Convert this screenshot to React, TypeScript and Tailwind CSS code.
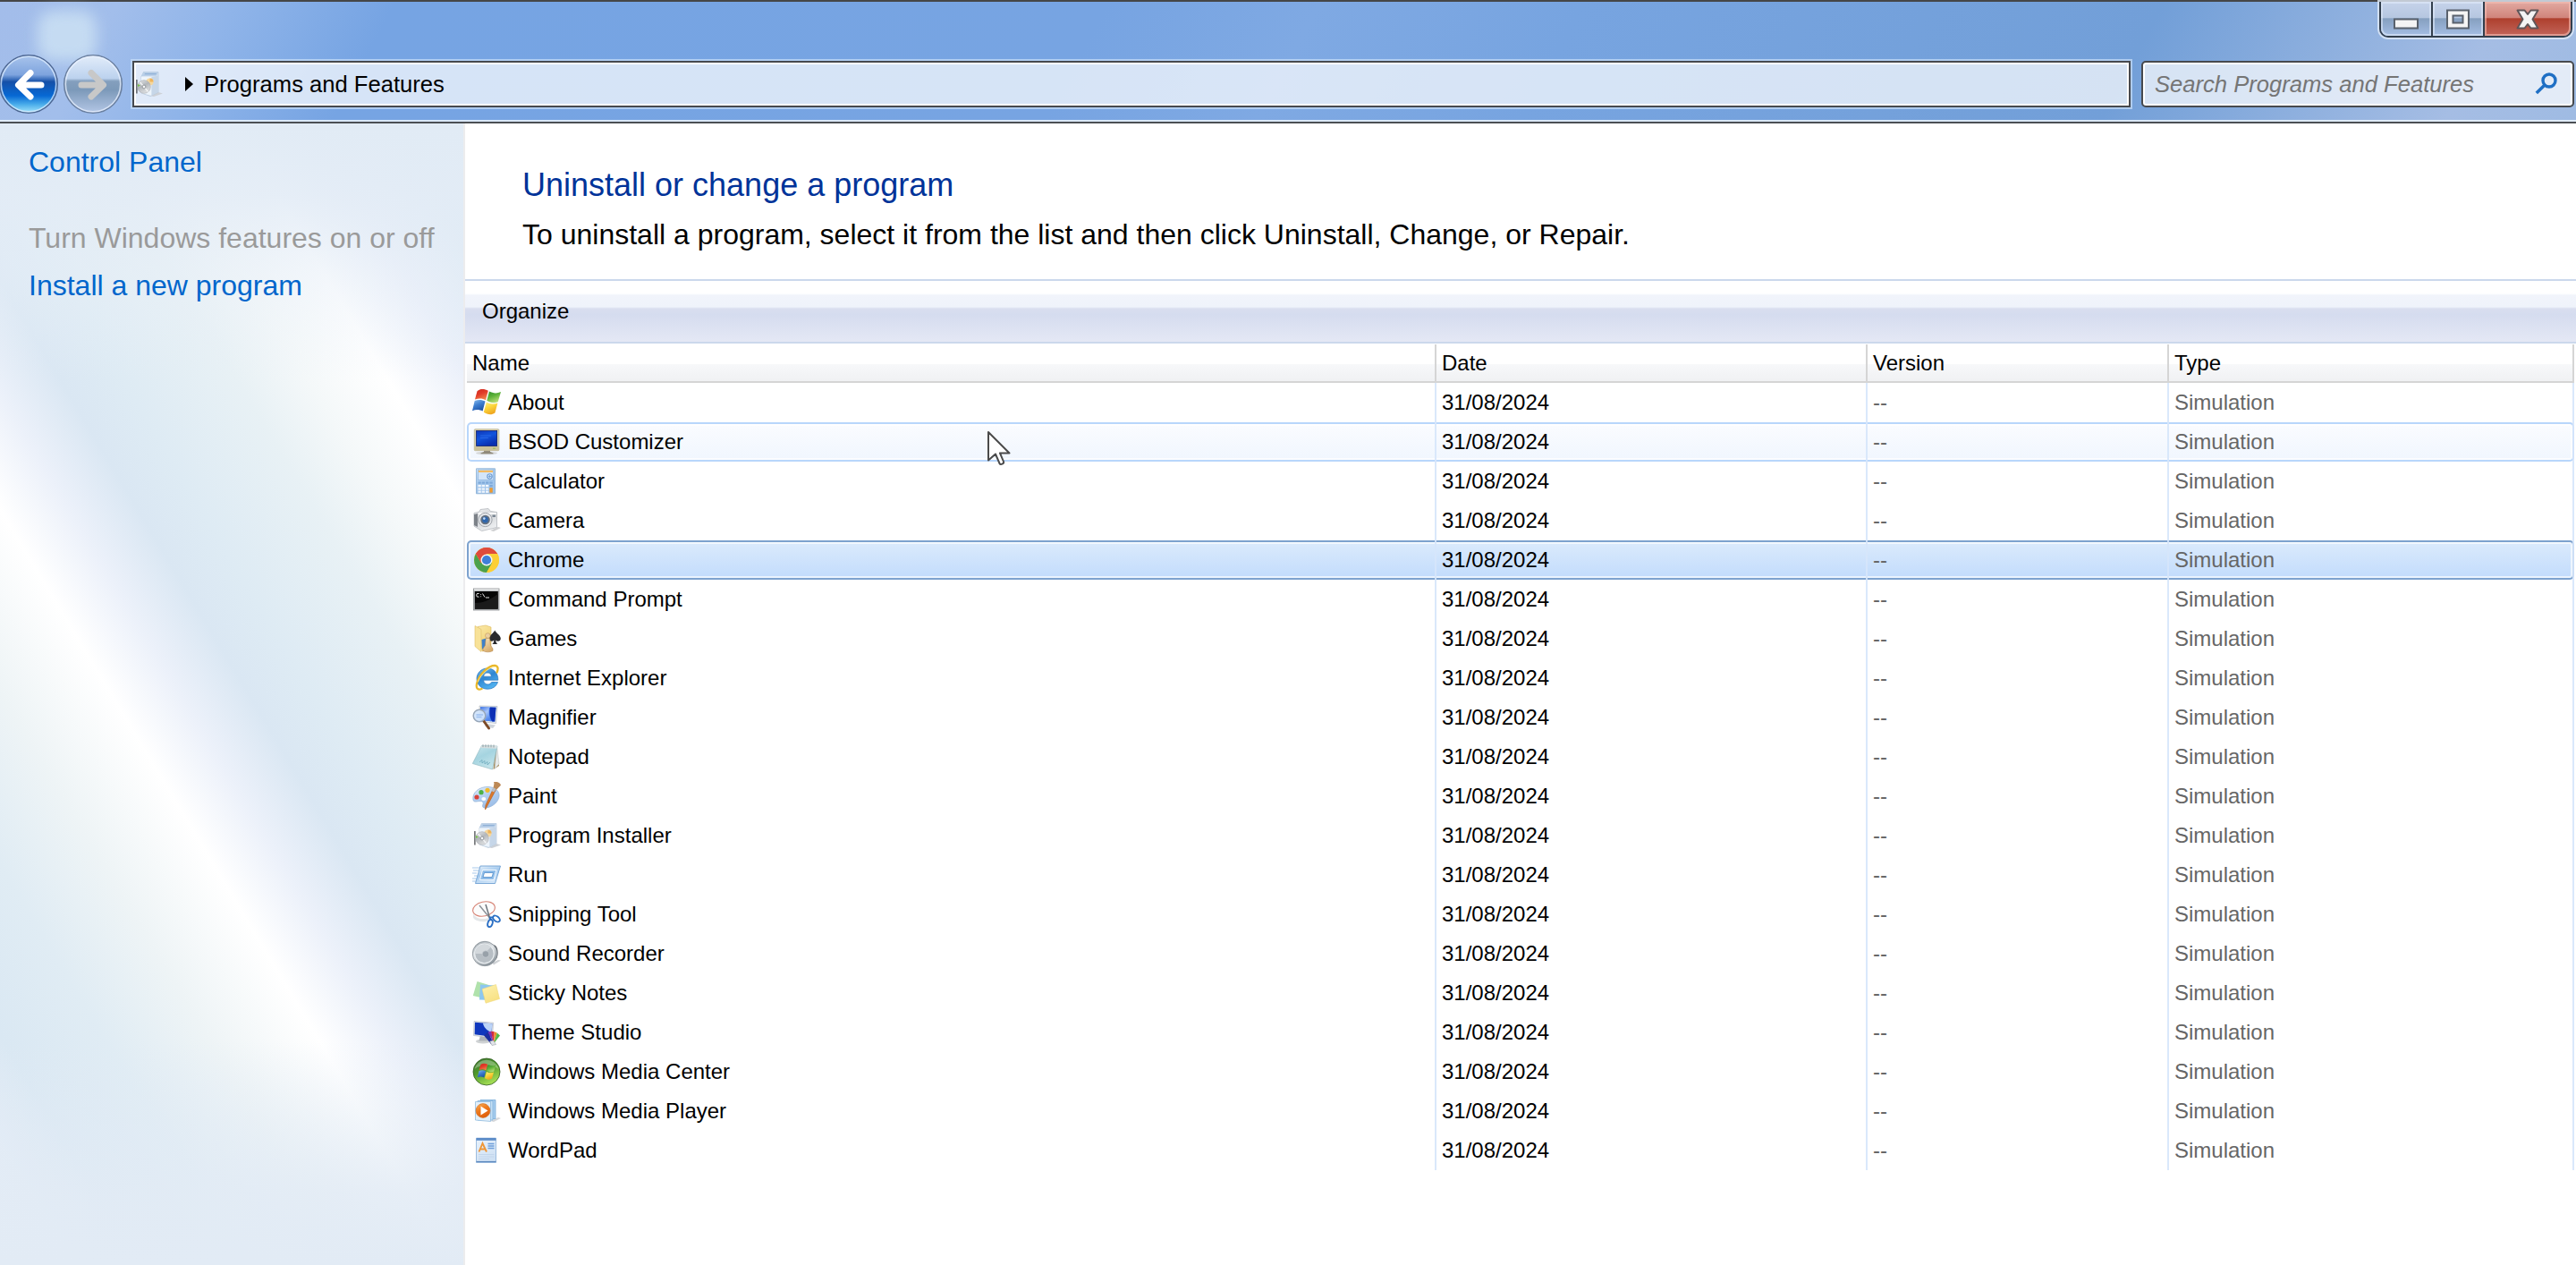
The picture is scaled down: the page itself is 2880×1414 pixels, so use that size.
import React from "react";

type IconProps = { className?: string };

function Svg({ children, className = "" }: { children: React.ReactNode; className?: string }) {
  return (
    <svg viewBox="0 0 32 32" className={`h-8 w-8 shrink-0 ${className}`} fill="none">
      {children}
    </svg>
  );
}

function Flag() {
  return (
    <>
      <path d="M5.500 3.200C9 .4 13.500 .6 17.800 2.800L15 13.200C11.500 11 7.500 11 3 12.400Z" fill="url(#fr)" />
      <path d="M19 3.600C23 5.600 27.500 6.200 32 4L28.800 15C24.500 17.200 20 16 16.300 13.800Z" fill="url(#fg)" />
      <path d="M2.700 14C7 12.400 11 12.600 14.500 14.600L11.600 25.600C8 23.600 4 23.600 0 25.200Z" fill="url(#fb)" />
      <path d="M15.800 15.500C19.500 17.500 24 18.200 28.400 16.500L25.400 27.500C21 30.600 16.500 29 12.800 26.800Z" fill="url(#fy)" />
    </>
  );
}

const AboutIcon = () => <Svg><Flag /></Svg>;

const BsodIcon = () => (
  <Svg>
    <ellipse cx="16" cy="28.500" rx="12" ry="1.800" fill="#d5d7d8" />
    <path d="M13 25h7v2l3.500 1.500v.8h-14v-.8L13 27Z" fill="#8f897a" />
    <rect x="2.300" y="1.700" width="27.500" height="24" rx="1" fill="#d9d2b0" stroke="#b9b191" strokeWidth=".8" />
    <path d="M2.500 20.500h27v4.800h-27Z" fill="#c9c09a" />
    <rect x="4.600" y="3.500" width="23" height="17" fill="url(#screen)" stroke="#11206c" strokeWidth=".8" />
    <path d="M9 9h12M9 11.500h9" stroke="#2f6ce8" strokeWidth=".8" />
    <path d="M23 23.200h3" stroke="#9fbf5a" strokeWidth="1.200" />
  </Svg>
);

const CalculatorIcon = () => (
  <Svg>
    <path d="M4.500 1.800h21v28h-21Z" fill="url(#calc)" stroke="#8fb2d6" strokeWidth=".9" />
    <rect x="6.300" y="3" width="17.400" height="11.500" fill="#d3e5f9" stroke="#84aedb" strokeWidth=".6" />
    <rect x="7" y="3.800" width="16" height="2.200" fill="#f3bb62" />
    <circle cx="19.500" cy="10.500" r="2.700" stroke="#6b9bd2" strokeWidth="1.100" />
    <path d="M18 10.500h3.500M19.500 9v3" stroke="#6b9bd2" strokeWidth=".8" />
    {[16.5, 20, 23.5, 26.6].map((y) =>
      [6.5, 10.7, 15, 19.4].map((x) => (
        <rect key={`${x}-${y}`} x={x} y={y} width="3.300" height="2.200" fill={x > 18 || y < 18 ? "#7ea9da" : "#f1f6fc"} />
      ))
    )}
    <rect x="19.400" y="23.300" width="3.300" height="5.300" fill="#f09a2c" />
  </Svg>
);

const CameraIcon = () => (
  <Svg>
    <path d="M20 27l9-4 3 1-8 4Z" fill="#cfd0d2" />
    <path d="M2 7.500l6-1.500 1-2.500 9-1 2.500 3 7 1v17l-17 4L2 22Z" fill="url(#metal)" stroke="#b4b8bc" strokeWidth=".8" />
    <path d="M2 9l4-1v15l-4-2Z" fill="#7c8188" />
    <path d="M7 8l20 0" stroke="#fff" strokeWidth="1.600" />
    <circle cx="14.500" cy="15" r="7.600" fill="#e6e8eb" stroke="#9ea3a9" />
    <circle cx="14.500" cy="15" r="5.300" fill="#66717e" />
    <circle cx="14.500" cy="15" r="3.400" fill="#2f67ad" />
    <circle cx="13.300" cy="13.600" r="1.300" fill="#c5dcf5" />
    <rect x="22.500" y="9.500" width="3.500" height="2.500" fill="#7c8794" />
  </Svg>
);

const ChromeIcon = () => (
  <Svg>
    <circle cx="16" cy="16" r="14" fill="#fdd03b" />
    <path d="M16 16L3.900 9A14 14 0 0 1 28.100 9Z" fill="#df4b3c" />
    <path d="M3.900 9A14 14 0 0 0 16 30l6-10.500L16 16 10 19.500Z" fill="#4aa14d" />
    <path d="M16 9h12.100A14 14 0 0 1 16 30l6.200-10.500Z" fill="#fccf35" />
    <path d="M3.900 9A14 14 0 0 1 28.100 9H16l-6 10.500Z" fill="#df4b3c" />
    <circle cx="16" cy="16" r="6.500" fill="#f5f6f7" />
    <circle cx="16" cy="16" r="5.100" fill="#3f7fd8" />
  </Svg>
);

const CommandIcon = () => (
  <Svg>
    <rect x="1.400" y="4" width="28.600" height="24" fill="#b7babd" stroke="#8d9092" strokeWidth=".8" />
    <path d="M2 5.200h27.500" stroke="#e9ebec" strokeWidth="1.500" />
    <rect x="2.800" y="7" width="26" height="19.800" fill="#050505" />
    <path d="M3 20c9 0 16-3 25.600-10v16.500H3Z" fill="#1a1a1a" />
    <path d="M7.500 9.500H6q-1.200 0-1.200 1.200v1.200q0 1.200 1.200 1.200h1.500M9.600 10v.8M9.600 12.400v.8M11.500 9.500l2.500 4M15 14h4" stroke="#e5e5e5" strokeWidth="1" />
  </Svg>
);

const GamesIcon = () => (
  <Svg>
    <path d="M6 2.500l9-1.500 6 2v24l-10 3Z" fill="url(#folder)" stroke="#dcb95b" strokeWidth=".6" />
    <path d="M3 1.500l7 4v25l-7-6Z" fill="#f8e298" stroke="#dfc06a" strokeWidth=".6" />
    <path d="M10.500 17l5-1.500L19 27l-8 .5Z" fill="#3f80c8" />
    <path d="M25.200 6.500c1.500 3.300 6.600 5.500 6.600 9.300 0 3-3.500 4-5.500 1.800 0 2 .8 3.500 2 4.500h-6c1.200-1 2-2.500 2-4.500-2 2.200-5.300 1.200-5.300-1.800 0-3.800 4.700-6 6.200-9.300Z" fill="#29292c" />
    <circle cx="17.300" cy="12.500" r="2.800" fill="#ecd0a0" stroke="#b98c50" strokeWidth=".5" />
    <path d="M15.200 15.500h4.300l1 8 2.500 3.500v2.500c-3 1.800-8 1.800-11 0V27l2.400-3.500Z" fill="url(#pawn)" stroke="#ae8047" strokeWidth=".5" />
  </Svg>
);

const IeIcon = () => (
  <Svg>
    <path d="M28.500 20.500c-1.700 5-6 7.700-11.500 7.700-7 0-12-5-12-11.500S10 5 17 5 29 10.500 28.800 18.200H12.600c.2 3 2 4.800 4.800 4.800 2 0 3.500-.9 4.200-2.500Z" fill="url(#ie)" stroke="#2471bb" strokeWidth=".7" />
    <path d="M12.700 14.200h8.700c-.3-2.700-1.900-4.200-4.400-4.200s-4 1.600-4.300 4.200Z" fill="#f7fbff" stroke="#2471bb" strokeWidth=".6" />
    <path d="M27.600 9.500C29.500 5 28.500 2.300 25.600 2 19 1.500 8 11 5.200 21.500c-1.300 5 .2 8.500 5.300 6.500" stroke="#e9b72a" strokeWidth="2.300" strokeLinecap="round" />
    <path d="M26.500 3.500C20 2.500 10 11 6.500 20" stroke="#fff0a0" strokeWidth=".8" />
  </Svg>
);

const MagnifierIcon = () => (
  <Svg>
    <path d="M16 23l10 1.500-3 3.500-9-2Z" fill="#cfd4da" />
    <path d="M8 3l20 .5-1.500 19L9 20.500Z" fill="#e5e9ee" stroke="#a8b0ba" strokeWidth=".6" />
    <path d="M9 4.300l17.500.5-1.300 16L10 19Z" fill="#3b78ea" />
    <path d="M9 4.300l10 .3c-1 6 0 11 2 15.700L10 19Z" fill="url(#screen2)" />
    <path d="M20 4.600l6.500.2-1.300 15.800-3-.2c-3-5-3.200-10-2.200-15.800Z" fill="#0d2fb5" />
    <path d="M12.500 19.500l6 8.500" stroke="#7c4a26" strokeWidth="3" strokeLinecap="round" />
    <circle cx="8" cy="14" r="6.800" fill="#cfe3fb" fillOpacity=".92" stroke="#97a6b8" strokeWidth="1.500" />
    <path d="M4.500 13h7.500M4.500 15.500h6" stroke="#9dbff0" strokeWidth="1.300" />
  </Svg>
);

const NotepadIcon = () => (
  <Svg>
    <path d="M26 6l4 20-6.500 4Z" fill="#a78a55" />
    <path d="M27.500 4l2.500 20-5 5.500Z" fill="#e6eaea" stroke="#b6bcbc" strokeWidth=".5" />
    <path d="M10.500 3.500L28 4 22.500 30 .3 23.500Z" fill="url(#note)" stroke="#8db5be" strokeWidth=".6" />
    <path d="M10.500 3.500L28 4l-.7 2.800L9.300 6Z" fill="#d8e0e2" />
    <path d="M12 2.200v3M15 2.200v3M18 2.300v3M21 2.400v3M24 2.500v3" stroke="#8b979b" strokeWidth=".9" />
    <path d="M8 22l3-2.500v3.500l3-2.500V24l3-2.500V25l3-3" stroke="#6fabbe" strokeWidth=".8" />
  </Svg>
);

const PaintIcon = () => (
  <Svg>
    <path d="M1 20C-.5 12 8 5 18 5.500c8 .4 12.600 5 12 10.500-.5 6-7 12-14.500 13-4 .5-4.500-1.500-3.500-4 .8-2.200-.6-3.600-3-3.600C6 21.500 1.500 23.500 1 20Z" fill="url(#palette)" stroke="#90b0d6" strokeWidth=".7" />
    <ellipse cx="12.800" cy="19" rx="2.500" ry="2" fill="#fff" />
    <circle cx="5" cy="17" r="2.600" fill="#d9433a" />
    <circle cx="10" cy="11.700" r="2.600" fill="#4db247" />
    <circle cx="17" cy="9.300" r="2.600" fill="#f0b92c" />
    <path d="M26.500 8.500L14.500 31 15 26 23.500 7.500Z" fill="#dd7a2c" stroke="#b45c1c" strokeWidth=".7" />
    <path d="M27 7.500l-2.800 4-2.800-1.600 2.200-4Z" fill="#b9bec4" />
    <path d="M24 0c3-1 7 1 8 3.500-1 2-3.500 3-4.500 5l-4-2.200C24 4 25 2 24 0Z" fill="#bd8956" />
  </Svg>
);

const InstallerIcon = ({ className }: IconProps) => (
  <Svg className={className}>
    <path d="M17 29l10-4 5 1.500-10 3.500Z" fill="#cdd1d7" />
    <path d="M8 7.500L10.500 2.500h16.500L27 25l-9 4.500L8 26Z" fill="#d9e5f3" stroke="#aabdd3" strokeWidth=".6" />
    <path d="M8 7.500l11.500.6v20.700L8 26Z" fill="#edf4fb" />
    <path d="M10.500 2.500H27l-2 4.300L8 7.300Z" fill="#b9cfe8" />
    <path d="M12 4h13l-.8 1.300H11.500Z" fill="#8fb0d6" />
    <path d="M19.500 8.100l7.300-1.600V25l-7.300 4Z" fill="#c6d6e8" />
    <circle cx="17.500" cy="13.500" r="4" fill="#f6d79c" />
    <path d="M17.500 9.500a4 4 0 0 1 4 4h-4Z" fill="#eeb45c" />
    <path d="M2.900 11v15.500" stroke="#4a4d50" strokeWidth="1.300" />
    <circle cx="11" cy="19" r="7.300" fill="url(#disc)" stroke="#a6aaaf" strokeWidth=".6" />
    <path d="M11 19l-4.500-5M11 19l4.500 5.500" stroke="#f2f3f4" strokeWidth="1.400" />
    <path d="M7 17.500l-3-1.500v3Z" fill="#77c14b" />
    <circle cx="11" cy="19" r="1.900" fill="#f6f7f8" stroke="#80858b" strokeWidth=".8" />
  </Svg>
);

const RunIcon = () => (
  <Svg>
    <path d="M0 8h8M1 11h6M0 14h5M2 17h4M0 20h5M0 23h4" stroke="#a7c9ea" strokeWidth="1" />
    <path d="M9 6h22.500l-6 19.500H3.500Z" fill="url(#run)" stroke="#6d9fd2" strokeWidth=".9" />
    <path d="M11.500 10.500h15.500l-3 11H8.500Z" fill="#8fbde9" stroke="#fff" strokeWidth=".9" />
    <path d="M13.500 13.500h10l-1.500 5H12Z" fill="#fff" stroke="#4f8cc9" strokeWidth=".8" />
  </Svg>
);

const SnippingIcon = () => (
  <Svg>
    <path d="M1 15c2 6 12 8 20 4v3c-7 4-19 2-20-3Z" fill="#e3e6e8" />
    <ellipse cx="13" cy="10" rx="12.500" ry="8" transform="rotate(-12 13 10)" fill="#fcfcfc" stroke="#d78476" strokeWidth="1.100" />
    <path d="M8 6l11.500 14" stroke="#8c9299" strokeWidth="1.500" />
    <path d="M15 5l4.500 15" stroke="#6c737b" strokeWidth="1.500" />
    <ellipse cx="20" cy="26" rx="2.600" ry="4.200" transform="rotate(18 20 26)" stroke="#2b6fc4" strokeWidth="1.900" />
    <ellipse cx="27" cy="21" rx="2.700" ry="4.400" transform="rotate(-52 27 21)" stroke="#2b6fc4" strokeWidth="1.900" />
    <path d="M19.500 19.500l1 3M19.500 19.500l4 0" stroke="#2b6fc4" strokeWidth="2" />
  </Svg>
);

const SoundIcon = () => (
  <Svg>
    <path d="M22 26l7-3 3 .5-8 5Z" fill="#cfd2d5" />
    <path d="M17 3l9 4c3.500 3 3.500 13 0 16l-8 6Z" fill="#5d6369" />
    <path d="M20 6l5 2v15l-5 4Z" fill="#b4babf" />
    <circle cx="14" cy="16" r="13.700" fill="url(#metal2)" stroke="#8d959c" strokeWidth=".9" />
    <circle cx="13.500" cy="16" r="10.800" fill="#b7bec4" stroke="#e9edf0" strokeWidth="1.200" />
    <path d="M3 16a10.600 10.600 0 0 1 18-7.500L13.500 16Z" fill="#d3d8dc" />
    <circle cx="15" cy="16.500" r="3.800" fill="#98a1a9" stroke="#c9cfd4" strokeWidth=".7" />
  </Svg>
);

const StickyIcon = () => (
  <Svg>
    <path d="M5.500 3l13 4-5 15L.8 19Z" fill="#b0e2ac" />
    <path d="M9 6.500l16 1-2 16.500-15-.5Z" fill="#8cc7f0" />
    <path d="M11 11.500L26.500 6.500l4 16-15.500 4.800Z" fill="url(#sticky)" stroke="#eed56e" strokeWidth=".5" />
  </Svg>
);

const ThemeIcon = () => (
  <Svg>
    <ellipse cx="12" cy="26" rx="8" ry="2.500" fill="#cfd2d4" />
    <path d="M9 19h7l1 6.500H7.500Z" fill="#adb2b7" />
    <path d="M2 3.500l21.500 1.700-1 17L1.500 19.500Z" fill="#dde2e8" stroke="#a4abb5" strokeWidth=".5" />
    <path d="M3 4.700l19.300 1.500-.8 14.500L2.700 18.300Z" fill="#0f37bd" />
    <path d="M12 5.400l10.300.8-.7 10C16 13.500 12.500 10 12 5.400Z" fill="#bcd4f8" />
    <path d="M13 19.500l4.500-4 6.500 13-3 .5Z" fill="#1b2e9e" />
    <path d="M17.500 15.500l3.500-.7 3 13.700Z" fill="#7c32b4" />
    <path d="M21 14.800l3.700.4-.7 13.300Z" fill="#d32c3e" />
    <path d="M24.700 15.200l3 1.300-3.700 12Z" fill="#ef8d26" />
    <path d="M27.700 16.500l3.300 3-7 9Z" fill="#53b749" />
    <path d="M19.500 26l4-1 3 4.500-4.500 1Z" fill="#e1e4e8" stroke="#8c939b" strokeWidth=".5" />
  </Svg>
);

const MediaCenterIcon = () => (
  <Svg>
    <circle cx="16" cy="16" r="15" fill="url(#mc)" stroke="#2f5c1d" strokeWidth=".8" />
    <path d="M2.500 13A14 14 0 0 1 29.500 13C22 7 10 7 2.500 13Z" fill="#fff" fillOpacity=".3" />
    <g transform="translate(5.800 6) scale(.64)"><Flag /></g>
  </Svg>
);

const MediaPlayerIcon = () => (
  <Svg>
    <path d="M20 27l9-4 3 1-8 4Z" fill="#d5d7da" />
    <path d="M9 3.500h17v21H9Z" fill="#a7cdee" stroke="#6ea5d4" strokeWidth=".7" />
    <path d="M6 4.500h17v21.500H6Z" fill="#c4dff5" stroke="#78acd8" strokeWidth=".7" />
    <path d="M3.500 5.500l17 0v22l-17-1.500Z" fill="#e2eff9" stroke="#86b4db" strokeWidth=".7" />
    <circle cx="12" cy="15.500" r="7.900" fill="url(#wmp)" stroke="#cc681b" strokeWidth=".6" />
    <path d="M9.500 10.500l8 5-8 5Z" fill="#fff" />
  </Svg>
);

const WordpadIcon = () => (
  <Svg>
    <path d="M4.500 2.500h22v27h-22Z" fill="url(#wp)" stroke="#89afd8" strokeWidth=".8" />
    <rect x="4.500" y="1.800" width="22" height="3" fill="#5c8cc8" />
    <path d="M7.500 17.500L11.500 8l4.500 9.500M9 14.500h5.500" stroke="#ef9636" strokeWidth="1.900" />
    <path d="M17.500 8.500h7M17.500 11h7M17.500 13.500h7" stroke="#6f9fda" strokeWidth="1.300" />
    <path d="M7 20.500h17.500M7 23h17.500M7 25.500h12" stroke="#c3d6ec" strokeWidth="1" />
    <path d="M4.500 28.500h22" stroke="#5c88bd" strokeWidth="1.200" />
  </Svg>
);

function Grad({ id, stops }: { id: string; stops: string[] }) {
  return (
    <linearGradient id={id} x1="0" y1="0" x2="0.5" y2="1">
      {stops.map((c, i) => (
        <stop key={i} offset={i / (stops.length - 1)} stopColor={c} />
      ))}
    </linearGradient>
  );
}

function Gradients() {
  return (
    <svg className="absolute h-0 w-0">
      <defs>
        <Grad id="fr" stops={["#cf2a20", "#e23a28", "#f08049"]} />
        <Grad id="fg" stops={["#2f8f2a", "#5fb23a", "#b6dd74"]} />
        <Grad id="fb" stops={["#8fc0ee", "#3f7fd0", "#1f55a8"]} />
        <Grad id="fy" stops={["#fdf08a", "#fbd63c", "#efa51f"]} />
        <Grad id="screen" stops={["#1037b8", "#1254dc", "#0a2fb0"]} />
        <Grad id="screen2" stops={["#3f74e4", "#a9c7fb", "#4f86ee"]} />
        <Grad id="calc" stops={["#d3e6f8", "#a9cbee", "#9cc2ea"]} />
        <Grad id="metal" stops={["#f4f5f6", "#d2d5d8", "#eceef0"]} />
        <Grad id="metal2" stops={["#98a1a8", "#e2e6e9", "#8f989f"]} />
        <Grad id="folder" stops={["#fbe9a8", "#f0cf70"]} />
        <Grad id="pawn" stops={["#f8e4bf", "#d9ad6c"]} />
        <Grad id="ie" stops={["#7fc4f2", "#2f86d2", "#4fb0ee"]} />
        <Grad id="note" stops={["#c9e6ed", "#a5d4e0", "#c2e3ea"]} />
        <Grad id="palette" stops={["#e6f0fb", "#b5d0f0", "#9dbfe8"]} />
        <Grad id="disc" stops={["#e9eaec", "#b2b6ba", "#dcdee0"]} />
        <Grad id="run" stops={["#eef6fd", "#a6cbef", "#d1e5f8"]} />
        <Grad id="sticky" stops={["#fdf2b0", "#f8e184"]} />
        <Grad id="mc" stops={["#3f6f33", "#4f9a2b", "#a3dd54"]} />
        <Grad id="wmp" stops={["#fbb25c", "#ee7a1d", "#e05f0c"]} />
        <Grad id="wp" stops={["#e9f2fb", "#cfe1f4"]} />
        <linearGradient id="backTop" x1="0" y1="0" x2="0" y2="1">
          <stop offset="0" stopColor="#a9c4ec" />
          <stop offset=".34" stopColor="#7ea4de" />
          <stop offset=".46" stopColor="#1550a8" />
          <stop offset=".7" stopColor="#0668d4" />
          <stop offset=".85" stopColor="#49acea" />
          <stop offset="1" stopColor="#a5e6fb" />
        </linearGradient>
        <linearGradient id="fwdTop" x1="0" y1="0" x2="0" y2="1">
          <stop offset="0" stopColor="#e3edfa" />
          <stop offset=".4" stopColor="#bcd2ee" />
          <stop offset=".45" stopColor="#849fbd" />
          <stop offset=".6" stopColor="#7c99b9" />
          <stop offset="1" stopColor="#b4c7e6" />
        </linearGradient>
      </defs>
    </svg>
  );
}

const programs: { name: string; Icon: React.ComponentType; state?: "hover" | "selected" }[] = [
  { name: "About", Icon: AboutIcon },
  { name: "BSOD Customizer", Icon: BsodIcon, state: "hover" },
  { name: "Calculator", Icon: CalculatorIcon },
  { name: "Camera", Icon: CameraIcon },
  { name: "Chrome", Icon: ChromeIcon, state: "selected" },
  { name: "Command Prompt", Icon: CommandIcon },
  { name: "Games", Icon: GamesIcon },
  { name: "Internet Explorer", Icon: IeIcon },
  { name: "Magnifier", Icon: MagnifierIcon },
  { name: "Notepad", Icon: NotepadIcon },
  { name: "Paint", Icon: PaintIcon },
  { name: "Program Installer", Icon: InstallerIcon },
  { name: "Run", Icon: RunIcon },
  { name: "Snipping Tool", Icon: SnippingIcon },
  { name: "Sound Recorder", Icon: SoundIcon },
  { name: "Sticky Notes", Icon: StickyIcon },
  { name: "Theme Studio", Icon: ThemeIcon },
  { name: "Windows Media Center", Icon: MediaCenterIcon },
  { name: "Windows Media Player", Icon: MediaPlayerIcon },
  { name: "WordPad", Icon: WordpadIcon },
];

const rowState = {
  none: "",
  hover:
    "rounded-[5px] bg-linear-to-b from-[#fbfcff] to-[#f0f6fe] shadow-[inset_0_0_0_2px_#b8d6fb,inset_0_0_0_4px_rgba(255,255,255,0.7)]",
  selected:
    "rounded-[5px] bg-linear-to-b from-[#dcebfc] to-[#c1dbfc] shadow-[inset_0_0_0_2px_#7da2ce,inset_0_0_0_4px_rgba(255,255,255,0.65)]",
};

function WindowButtons() {
  return (
    <div className="mr-[4px] flex h-[40px] w-[216px] rounded-b-[10px] border-2 border-t-0 border-[#333f4d] shadow-[0_0_0_2px_rgba(225,235,248,0.8)]">
      <button className="flex w-[56px] items-center justify-center rounded-bl-[8px] bg-[linear-gradient(#c6d3ea_0%,#b5c6e0_48%,#859fbf_49%,#a5bee4_100%)] shadow-[inset_0_0_0_2px_rgba(225,235,250,0.6)]">
        <svg className="h-8 w-8" viewBox="0 0 32 32"><rect x="3" y="16.500" width="26" height="10" fill="#f4f4f4" stroke="#59616c" strokeWidth="2" /></svg>
      </button>
      <button className="flex w-[58px] items-center justify-center border-l-2 border-[#333f4d] bg-[linear-gradient(#c6d3ea_0%,#b5c6e0_48%,#859fbf_49%,#a5bee4_100%)] shadow-[inset_0_0_0_2px_rgba(225,235,250,0.6)]">
        <svg className="h-8 w-8" viewBox="0 0 32 32"><path fillRule="evenodd" d="M4 6.500h24v20H4ZM10.500 12.500h11v8h-11Z" fill="#f4f4f4" stroke="#59616c" strokeWidth="2" /></svg>
      </button>
      <button className="flex flex-1 items-center justify-center rounded-br-[8px] border-l-2 border-[#333f4d] bg-[linear-gradient(#e2aaa2_0%,#d0837a_48%,#ae3f2d_49%,#c2655a_100%)] shadow-[inset_0_0_0_2px_rgba(245,190,180,0.6)]">
        <svg className="h-8 w-8" viewBox="0 0 32 32"><path d="M4.500 6.500h8l3.500 4.500 3.500-4.500h8L21.500 16.500 27.500 26.500h-8L16 22l-3.500 4.500h-8L10.500 16.500Z" fill="#f4f4f4" stroke="#5f5659" strokeWidth="2" strokeLinejoin="round" /></svg>
      </button>
    </div>
  );
}

function NavButtons() {
  return (
    <svg className="h-[68px] w-[138px] shrink-0" viewBox="0 0 138 68" fill="none">
      <circle cx="32" cy="34" r="32.300" fill="url(#backTop)" stroke="#4e6792" strokeWidth="1.500" />
      <circle cx="32" cy="34" r="30.700" stroke="#dcecff" strokeOpacity=".75" strokeWidth="1.600" />
      <path d="M46 35H21M34 21.500L20.500 35 34 48" stroke="#fff" strokeWidth="7" strokeLinecap="round" strokeLinejoin="round" />
      <circle cx="104" cy="34" r="32.300" fill="url(#fwdTop)" stroke="#6a7f9f" strokeWidth="1.500" />
      <circle cx="104" cy="34" r="30.700" stroke="#eaf2ff" strokeOpacity=".75" strokeWidth="1.600" />
      <path d="M91 35H115M102 21.500L115.500 35 102 48" stroke="#c8c8c8" strokeWidth="7" strokeLinecap="round" strokeLinejoin="round" />
    </svg>
  );
}

function TitleBar() {
  return (
    <header className="relative flex h-[138px] shrink-0 flex-col border-y-2 border-t-[#454647] border-b-[#4b4f54] bg-[linear-gradient(118deg,#a3bdea_0%,#a2beeb_4.500%,#8fb4e9_9%,#76a4e3_15%,#77a4e2_42%,#7fa9e3_50%,#77a4e0_60%,#729fd8_82%,#8dafde_89%,#a5bde4_95%,#9fbbe3_100%)] shadow-[inset_0_-2px_0_rgba(235,244,252,0.85)]">
      <div className="pointer-events-none absolute top-[10px] left-[42px] h-[56px] w-[66px] rounded-[18px] bg-[#cbe0f3]/85 blur-[8px]" />
      <div className="relative flex h-[58px] items-start justify-end">
        <WindowButtons />
      </div>
      <div className="relative flex items-start">
        <NavButtons />
        <div className="mt-2 ml-[10px] flex h-[52px] w-[2234px] shrink-0 items-center overflow-hidden border-2 border-[#46494e] bg-white/70 shadow-[inset_0_0_0_2px_#fff,0_0_0_2px_rgba(200,222,248,0.7)]">
          <div className="-mt-px ml-[2px] w-[32px] overflow-hidden">
            <InstallerIcon className="-ml-[2px]" />
          </div>
          <svg className="ml-[23px] h-[18px] w-[9px]" viewBox="0 0 9 18"><path d="M0 1l9 8-9 8Z" fill="#000" /></svg>
          <span className="ml-[12px] text-[25.600px] leading-[30px]">Programs and Features</span>
        </div>
        <div className="mt-2 ml-3 flex h-[52px] w-[484px] shrink-0 items-center justify-between rounded-[5px] border-2 border-[#46494e] bg-white/70 pr-[16px] pl-[13px] shadow-[inset_0_0_0_2px_#fff]">
          <span className="text-[25.600px] leading-[30px] text-[#757575] italic">Search Programs and Features</span>
          <svg className="h-[26px] w-[26px]" viewBox="0 0 26 26" fill="none">
            <circle cx="16" cy="9" r="7" stroke="#1f6fc4" strokeWidth="3.400" />
            <path d="M11 14L1.800 23" stroke="#1f6fc4" strokeWidth="3.600" />
          </svg>
        </div>
      </div>
    </header>
  );
}

function Sidebar() {
  return (
    <aside className="flex w-[520px] shrink-0 flex-col border-r-2 border-[#ececee] bg-[linear-gradient(to_bottom,#e1ebf5_0px,rgba(227,236,246,0.9)_80px,rgba(230,238,247,0.5)_170px,rgba(225,235,245,0)_290px),linear-gradient(to_top,#e2ebf5_0px,rgba(226,235,245,0.85)_80px,rgba(226,235,245,0)_250px),linear-gradient(59deg,#e8eef8_0%,#e6edf7_4%,#dae8f3_12%,#e0ecf4_21%,#eef4f6_30%,#ffffff_39.500%,#ecf1fa_45.500%,#dae7f3_51.500%,#deebf4_57%,#e8f1f5_67%,#f4f8f9_73%,#ffffff_80%,#ebf0fa_87%,#dae8f3_95%,#dae8f3_100%)] pt-[24px] pl-8 text-[32px] leading-[38px]">
      <a className="text-[#0066cc]">Control Panel</a>
      <a className="mt-[47px] whitespace-nowrap text-[#9a9a9a]">Turn Windows features on or off</a>
      <a className="mt-[15px] text-[#0066cc]">Install a new program</a>
    </aside>
  );
}

function ProgramTable() {
  const cols = "grid grid-cols-[1084px_482px_337px_453px]";
  const head = "border-r-2 border-[#d5d5d5]";
  const cell = "flex items-center border-r-2 border-[#d6e5fb]/90";
  return (
    <div className="mt-px ml-[2px] w-[2356px] text-[24px]">
      <div className={`${cols} h-[43px] border-b-2 border-[#d5d5d5] bg-[linear-gradient(#fff_0%,#fff_53%,#f7f8fa_54%,#f0f1f3_100%)] leading-[41px]`}>
        <div className={`${head} pl-[6px]`}>Name</div>
        <div className={`${head} pl-[6px]`}>Date</div>
        <div className={`${head} pl-[6px]`}>Version</div>
        <div className={`${head} pl-[6px]`}>Type</div>
      </div>
      {programs.map(({ name, Icon, state }) => (
        <div key={name} className={`${cols} h-[44px] ${rowState[state ?? "none"]}`}>
          <div className={`${cell} gap-[8px] pl-[6px]`}>
            <Icon />
            <span>{name}</span>
          </div>
          <div className={`${cell} pl-[6px]`}>31/08/2024</div>
          <div className={`${cell} pl-[6px] text-[#666]`}>--</div>
          <div className={`${cell} pl-[6px] text-[#666]`}>Simulation</div>
        </div>
      ))}
    </div>
  );
}

export default function App() {
  return (
    <div className="relative flex h-[1414px] w-[2880px] flex-col overflow-hidden bg-white font-['Liberation_Sans',Arial,sans-serif] text-black">
      <Gradients />
      <TitleBar />
      <div className="flex min-h-0 flex-1">
        <Sidebar />
        <main className="flex min-w-0 flex-1 flex-col">
          <div className="flex h-[176px] shrink-0 flex-col border-b-2 border-[#cbd8ec] pt-[48px] pl-[64px]">
            <h1 className="text-[36px] leading-[42px] text-[#003399]">Uninstall or change a program</h1>
            <p className="mt-[15px] text-[32px] leading-[38px]">
              To uninstall a program, select it from the list and then click Uninstall, Change, or Repair.
            </p>
          </div>
          <div className="flex h-[70px] shrink-0 items-center border-b-2 border-[#cbd8ec] bg-[linear-gradient(#fff_0px,#fff_14px,#f1f4fb_16px,#eff3fb_29px,#d9deef_31px,#d5dcef_38px,#e4e8f5_68px)] pl-[19px] text-[24px]">
            Organize
          </div>
          <ProgramTable />
        </main>
      </div>
      <svg className="pointer-events-none absolute top-[480px] left-[1102px] h-[42px] w-[30px]" viewBox="0 0 30 42">
        <path d="M3 3v31.500l8-7 4.500 10.500c1 2 5.500.5 4.500-2L16 26.500h10.500Z" fill="#fff" stroke="#4a4a4a" strokeWidth="2" strokeLinejoin="round" />
      </svg>
    </div>
  );
}
